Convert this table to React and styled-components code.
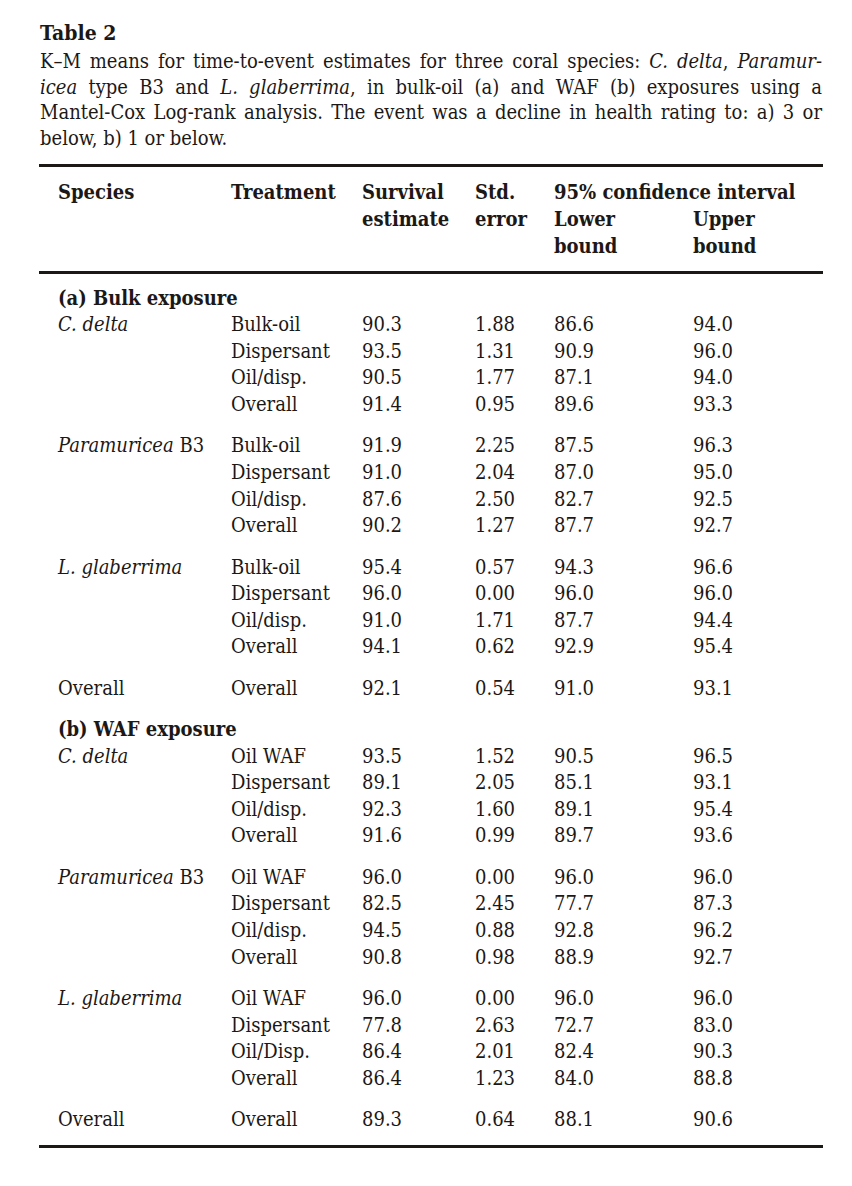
import React from "react";
import styled, { createGlobalStyle } from "styled-components";

const Global = createGlobalStyle`
  html, body { margin: 0; padding: 0; background: #ffffff; }
  body {
    font-family: "DejaVu Serif Condensed", "DejaVu Serif", serif;
    font-stretch: semi-condensed;
    color: #1c1816;
  }
`;

const Page = styled.div`
  width: 784px;
  padding: 21px 0 0 39px;
  box-sizing: content-box;
`;

const Title = styled.h2`
  margin: 0 0 0 1px;
  font-size: 21px;
  line-height: 24px;
  font-weight: bold;
`;

const Caption = styled.div`
  margin: 4px 0 0 1px;
  width: 782px;
  font-size: 20px;
  line-height: 25.7px;
`;

const CaptionLine = styled.span`
  display: block;
  text-align: ${(p) => (p.$last ? "left" : "justify")};
  text-align-last: ${(p) => (p.$last ? "left" : "justify")};
  white-space: nowrap;
`;

const Table = styled.div`
  margin-top: 12px;
  border-top: 3px solid #1c1816;
  border-bottom: 3px solid #1c1816;
  font-size: 20px;
  line-height: 26.6px;
`;

const Head = styled.div`
  display: grid;
  grid-template-columns: 173px 131px 113px 79px 139px 1fr;
  padding: 12.5px 0 11.5px 19px;
  border-bottom: 3px solid #1c1816;
  font-weight: bold;
`;

const HeadCell = styled.div`
  grid-column: ${(p) => p.$col || "auto"};
  grid-row: ${(p) => p.$row || "auto"};
`;

const Body = styled.div`
  padding: 11px 0 12px 19px;
`;

const Section = styled.div`
  & + & { margin-top: 14.8px; }
`;

const SectionTitle = styled.div`
  font-weight: bold;
`;

const Group = styled.div`
  & + & { margin-top: 14.8px; }
`;

const Row = styled.div`
  display: grid;
  grid-template-columns: 173px 131px 113px 79px 139px 1fr;
  white-space: nowrap;
`;

const Cell = styled.div``;

const Species = styled.div``;

const Roman = styled.span`
  font-style: normal;
`;

const sections = [
  {
    title: "(a) Bulk exposure",
    groups: [
      {
        species: <><i>C. delta</i></>,
        rows: [
          ["Bulk-oil", "90.3", "1.88", "86.6", "94.0"],
          ["Dispersant", "93.5", "1.31", "90.9", "96.0"],
          ["Oil/disp.", "90.5", "1.77", "87.1", "94.0"],
          ["Overall", "91.4", "0.95", "89.6", "93.3"],
        ],
      },
      {
        species: <><i>Paramuricea</i> <Roman>B3</Roman></>,
        rows: [
          ["Bulk-oil", "91.9", "2.25", "87.5", "96.3"],
          ["Dispersant", "91.0", "2.04", "87.0", "95.0"],
          ["Oil/disp.", "87.6", "2.50", "82.7", "92.5"],
          ["Overall", "90.2", "1.27", "87.7", "92.7"],
        ],
      },
      {
        species: <><i>L. glaberrima</i></>,
        rows: [
          ["Bulk-oil", "95.4", "0.57", "94.3", "96.6"],
          ["Dispersant", "96.0", "0.00", "96.0", "96.0"],
          ["Oil/disp.", "91.0", "1.71", "87.7", "94.4"],
          ["Overall", "94.1", "0.62", "92.9", "95.4"],
        ],
      },
      {
        species: "Overall",
        rows: [["Overall", "92.1", "0.54", "91.0", "93.1"]],
      },
    ],
  },
  {
    title: "(b) WAF exposure",
    groups: [
      {
        species: <><i>C. delta</i></>,
        rows: [
          ["Oil WAF", "93.5", "1.52", "90.5", "96.5"],
          ["Dispersant", "89.1", "2.05", "85.1", "93.1"],
          ["Oil/disp.", "92.3", "1.60", "89.1", "95.4"],
          ["Overall", "91.6", "0.99", "89.7", "93.6"],
        ],
      },
      {
        species: <><i>Paramuricea</i> <Roman>B3</Roman></>,
        rows: [
          ["Oil WAF", "96.0", "0.00", "96.0", "96.0"],
          ["Dispersant", "82.5", "2.45", "77.7", "87.3"],
          ["Oil/disp.", "94.5", "0.88", "92.8", "96.2"],
          ["Overall", "90.8", "0.98", "88.9", "92.7"],
        ],
      },
      {
        species: <><i>L. glaberrima</i></>,
        rows: [
          ["Oil WAF", "96.0", "0.00", "96.0", "96.0"],
          ["Dispersant", "77.8", "2.63", "72.7", "83.0"],
          ["Oil/Disp.", "86.4", "2.01", "82.4", "90.3"],
          ["Overall", "86.4", "1.23", "84.0", "88.8"],
        ],
      },
      {
        species: "Overall",
        rows: [["Overall", "89.3", "0.64", "88.1", "90.6"]],
      },
    ],
  },
];

export default function App() {
  return (
    <>
      <Global />
      <Page>
        <Title>Table 2</Title>
        <Caption>
          <CaptionLine>
            K–M means for time-to-event estimates for three coral species: <i>C. delta</i>, <i>Paramur-</i>
          </CaptionLine>
          <CaptionLine>
            <i>icea</i> type B3 and <i>L. glaberrima</i>, in bulk-oil (a) and WAF (b) exposures using a
          </CaptionLine>
          <CaptionLine>
            Mantel-Cox Log-rank analysis. The event was a decline in health rating to: a) 3 or
          </CaptionLine>
          <CaptionLine $last>below, b) 1 or below.</CaptionLine>
        </Caption>
        <Table>
          <Head>
            <HeadCell $col="1" $row="1">Species</HeadCell>
            <HeadCell $col="2" $row="1">Treatment</HeadCell>
            <HeadCell $col="3" $row="1">Survival</HeadCell>
            <HeadCell $col="3" $row="2">estimate</HeadCell>
            <HeadCell $col="4" $row="1">Std.</HeadCell>
            <HeadCell $col="4" $row="2">error</HeadCell>
            <HeadCell $col="5 / 7" $row="1">95% confidence interval</HeadCell>
            <HeadCell $col="5" $row="2">Lower</HeadCell>
            <HeadCell $col="5" $row="3">bound</HeadCell>
            <HeadCell $col="6" $row="2">Upper</HeadCell>
            <HeadCell $col="6" $row="3">bound</HeadCell>
          </Head>
          <Body>
            {sections.map((s, si) => (
              <Section key={si}>
                <SectionTitle>{s.title}</SectionTitle>
                {s.groups.map((g, gi) => (
                  <Group key={gi}>
                    {g.rows.map((r, ri) => (
                      <Row key={ri}>
                        <Species>{ri === 0 ? g.species : ""}</Species>
                        {r.map((c, ci) => (
                          <Cell key={ci}>{c}</Cell>
                        ))}
                      </Row>
                    ))}
                  </Group>
                ))}
              </Section>
            ))}
          </Body>
        </Table>
      </Page>
    </>
  );
}
